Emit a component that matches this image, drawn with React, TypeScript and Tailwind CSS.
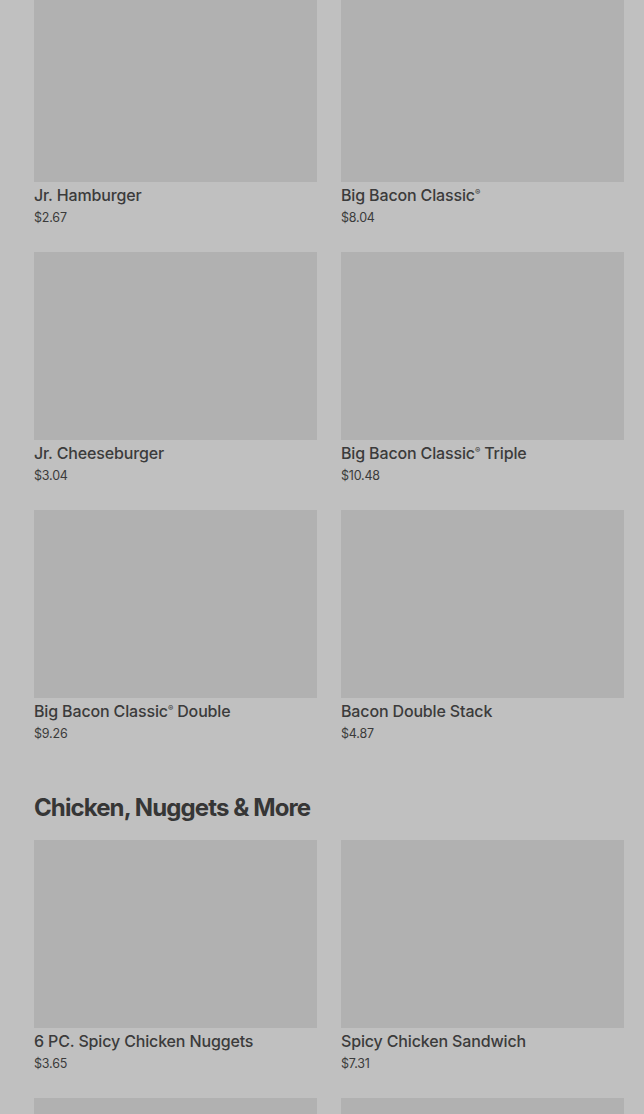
const burgers = [
  { name: 'Jr. Hamburger', price: '$2.67' },
  { name: 'Big Bacon Classic', reg: true, price: '$8.04' },
  { name: 'Jr. Cheeseburger', price: '$3.04' },
  { name: 'Big Bacon Classic', reg: true, suffix: ' Triple', price: '$10.48' },
  { name: 'Big Bacon Classic', reg: true, suffix: ' Double', price: '$9.26' },
  { name: 'Bacon Double Stack', price: '$4.87' },
];

const chicken = [
  { name: '6 PC. Spicy Chicken Nuggets', price: '$3.65' },
  { name: 'Spicy Chicken Sandwich', price: '$7.31' },
  { name: '', price: '' },
  { name: '', price: '' },
];

type Item = { name: string; price: string; reg?: boolean; suffix?: string };

function MenuItem({ item }: { item: Item }) {
  return (
    <div className="flex flex-col">
      <div className="h-[188px] w-full bg-[#b1b1b1]" />
      {item.name && (
        <>
          <div className="mt-px text-[16px] leading-6 font-medium tracking-[-0.15px] text-[#3b3b3b]">
            {item.name}
            {item.reg && <sup className="text-[8px] -top-[0.7em]">®</sup>}
            {item.suffix}
          </div>
          <div className="mt-px text-[12.5px] leading-5 tracking-[-0.2px] text-[#3b3b3b]">{item.price}</div>
        </>
      )}
    </div>
  );
}

export default function App() {
  return (
    <div
      className="h-[1114px] w-full overflow-hidden bg-[#c0c0c0] pl-[34px] pr-[20px]"
      style={{ fontFamily: 'Inter, "Noto Sans", sans-serif' }}
    >
      <div className="-mt-[6px] grid grid-cols-2 gap-x-6 gap-y-[24px]">
        {burgers.map((b, i) => (
          <MenuItem key={i} item={b} />
        ))}
      </div>
      <h2 className="mt-[48px] mb-[16px] text-[24px] leading-8 font-bold tracking-[-0.9px] text-[#363636]">
        Chicken, Nuggets &amp; More
      </h2>
      <div className="grid grid-cols-2 gap-x-6 gap-y-[24px]">
        {chicken.map((c, i) => (
          <MenuItem key={i} item={c} />
        ))}
      </div>
    </div>
  );
}
